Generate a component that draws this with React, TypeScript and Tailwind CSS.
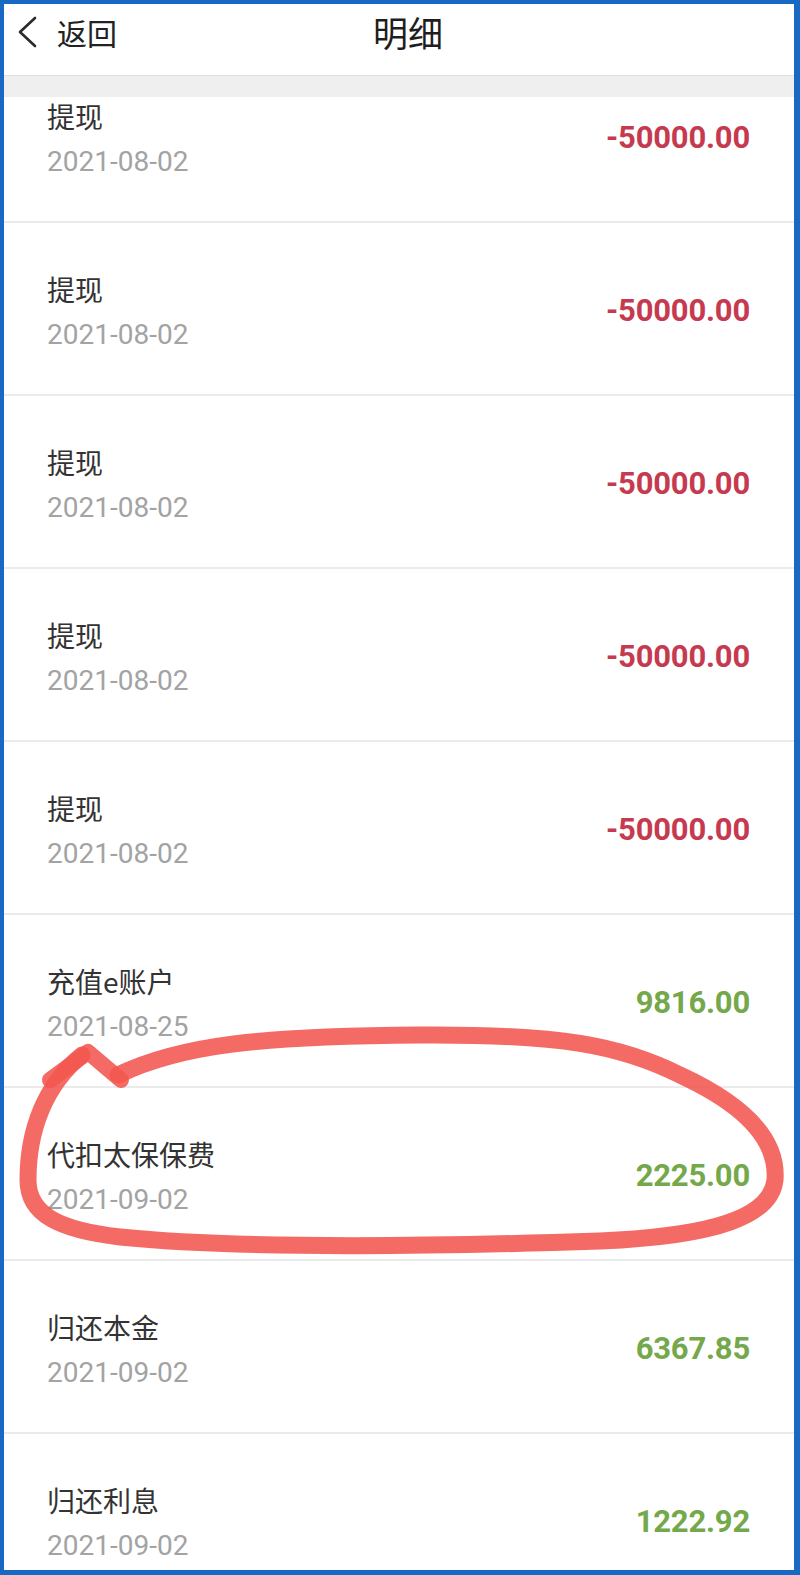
const rows = [
  { title: "提现", date: "2021-08-02", amount: "-50000.00", out: true },
  { title: "提现", date: "2021-08-02", amount: "-50000.00", out: true },
  { title: "提现", date: "2021-08-02", amount: "-50000.00", out: true },
  { title: "提现", date: "2021-08-02", amount: "-50000.00", out: true },
  { title: "提现", date: "2021-08-02", amount: "-50000.00", out: true },
  { title: "充值e账户", date: "2021-08-25", amount: "9816.00", out: false },
  { title: "代扣太保保费", date: "2021-09-02", amount: "2225.00", out: false },
  { title: "归还本金", date: "2021-09-02", amount: "6367.85", out: false },
  { title: "归还利息", date: "2021-09-02", amount: "1222.92", out: false },
];

const cjk = "font-['Noto_Sans_CJK_SC','Noto_Sans',sans-serif]";
const num = "font-['Roboto','Liberation_Sans',sans-serif]";

function Header() {
  return (
    <div className="grid grid-cols-[1fr_auto_1fr] items-center h-[72px] pb-[16px] border-b border-[#dedede] bg-white">
      <div className="flex items-center pl-[14px] gap-[19px]">
        <svg width="20" height="32" viewBox="0 0 20 32" fill="none">
          <polyline points="17,2 2,16 17,30" stroke="#2a2a2a" strokeWidth="2.6" strokeLinecap="round" strokeLinejoin="round" />
        </svg>
        <span className={`${cjk} text-[30px] leading-none text-[#222]`}>返回</span>
      </div>
      <div className={`${cjk} pl-[18px] text-[35px] leading-none text-[#1e1e1e]`}>明细</div>
      <div />
    </div>
  );
}

function Row({ title, date, amount, out }: (typeof rows)[number]) {
  return (
    <div className="h-[173px] shrink-0 flex items-center justify-between pt-[6px] pl-[43px] pr-[44px] border-b-2 border-[#ebebeb]">
      <div className="flex flex-col">
        <span className={`${cjk} text-[28px] leading-[36px] text-[#333]`}>{title}</span>
        <span className={`${num} mt-[10px] text-[28px] leading-[36px] text-[#a3a3a3]`}>{date}</span>
      </div>
      <span className={`${num} text-[31px] font-bold tracking-[-0.2px] ${out ? "text-[#c63a4f]" : "text-[#74a84a]"}`}>
        {amount}
      </span>
    </div>
  );
}

export default function App() {
  return (
    <div className="w-[800px] h-[1575px] bg-[#1769c4] pt-[4px] pl-[4px] pr-[6px] pb-[5px]">
      <div className="relative h-full bg-white flex flex-col overflow-hidden">
        <Header />
        <div className="h-[21px] shrink-0 bg-[#efefef]" />
        <div className="flex-1 overflow-hidden">
          <div className="-mt-[47px] flex flex-col">
            {rows.map((r, i) => (
              <Row key={i} {...r} />
            ))}
          </div>
        </div>
        {/* hand-drawn circle around the insurance fee row */}
        <svg className="absolute left-0 top-0 pointer-events-none" width="790" height="1566" viewBox="4 4 790 1566">
          <g stroke="#f2554f" strokeOpacity="0.88" fill="none" strokeLinecap="round" strokeLinejoin="round">
            <path
              strokeWidth="17"
              d="M118 1075 C180 1045 260 1036 420 1035 C560 1034 620 1045 680 1075 C745 1105 778 1140 775 1180 C771 1215 720 1236 600 1241 C450 1246 250 1250 120 1237 C60 1230 28 1215 28 1180 C28 1130 45 1085 82 1055"
            />
            <path strokeWidth="16" d="M50 1080 L88 1052 L121 1080" />
          </g>
        </svg>
      </div>
    </div>
  );
}
